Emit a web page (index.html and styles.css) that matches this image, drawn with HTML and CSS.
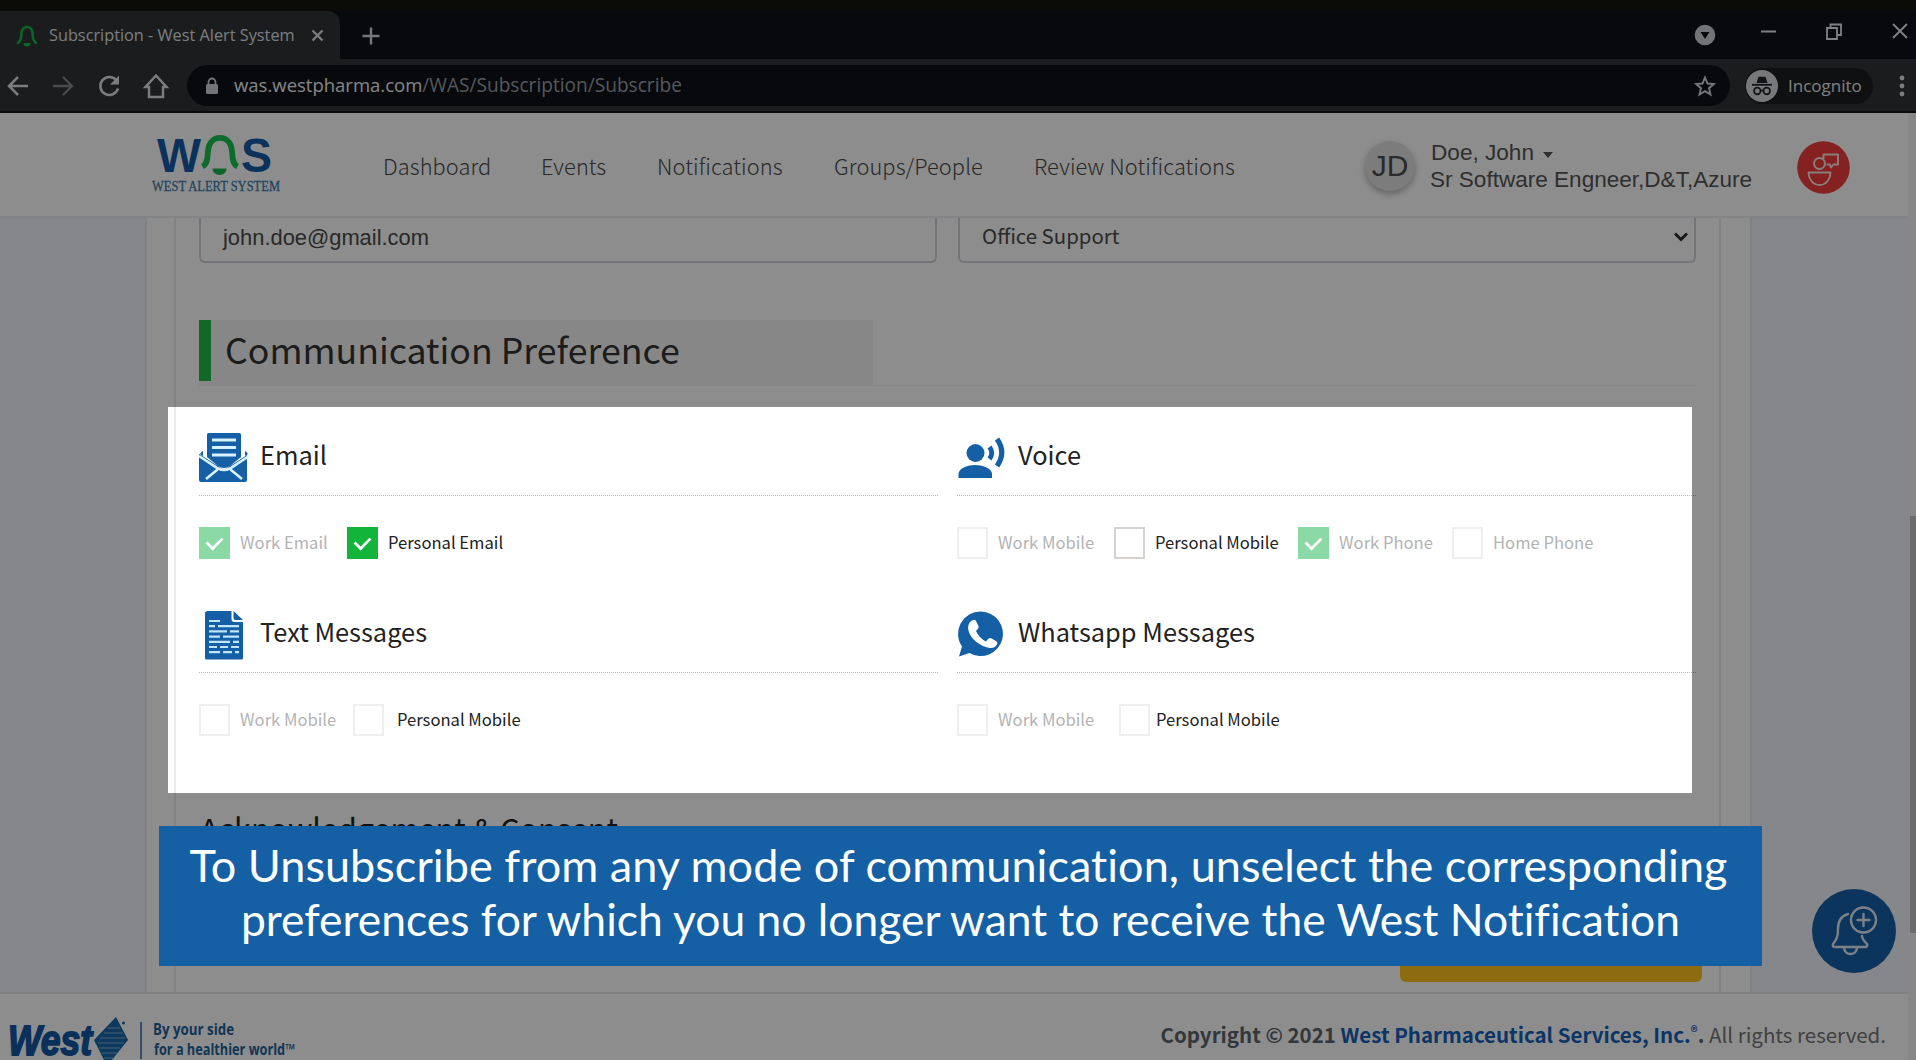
FILE: index.html
```
<!DOCTYPE html>
<html lang="en">
<head>
<meta charset="utf-8">
<title>Subscription - West Alert System</title>
<link rel="stylesheet" href="styles.css">
</head>
<body>
<div class="browser">
  <div class="tabstrip">
    <div class="tab">
      <svg class="tab-bell" width="22" height="24" viewBox="0 0 22 24"><path d="M2 19C6 16 5 12 5.500 9C6 1 16 1 16.500 9C17 12 16 16 20 19" fill="none" stroke="#14b848" stroke-width="2.600" stroke-linecap="round"/><path d="M7.500 19h7a3.500 3.500 0 0 1-7 0z" fill="#14b848"/></svg>
      <span class="tab-title">Subscription - West Alert System</span>
      <svg class="tab-close" width="13" height="13" viewBox="0 0 13 13"><path d="M1.500 1.500l10 10M11.500 1.500l-10 10" stroke="#dfe1e5" stroke-width="2.400"/></svg>
    </div>
    <svg class="tab-new" width="18" height="18" viewBox="0 0 18 18"><path d="M9 0.500v17M0.500 9h17" stroke="#d5d7da" stroke-width="2.400"/></svg>
    <div class="window-controls">
      <svg width="22" height="22" viewBox="0 0 22 22"><circle cx="11" cy="11" r="10.300" fill="#cfd2d6"/><path d="M6.500 8h9L11 15z" fill="#10151a"/></svg>
      <svg width="15" height="22" viewBox="0 0 15 22"><path d="M0 7.500h15" stroke="#e6e8ea" stroke-width="2"/></svg>
      <svg width="16" height="22" viewBox="0 0 16 22"><path d="M1 7h10v11H1zM4.500 7V3.500H15V14h-4" fill="none" stroke="#e6e8ea" stroke-width="1.800"/></svg>
      <svg width="16" height="22" viewBox="0 0 16 22"><path d="M1 3l14 14M15 3L1 17" stroke="#e6e8ea" stroke-width="1.900"/></svg>
    </div>
  </div>
  <div class="toolbar">
    <svg class="nav-icon" width="22" height="22" viewBox="0 0 22 22"><path d="M21 11H2.500M11 2l-9 9 9 9" fill="none" stroke="#dfe1e5" stroke-width="2.500"/></svg>
    <svg class="nav-icon dim" width="22" height="22" viewBox="0 0 22 22"><path d="M1 11h18.500M11 2l9 9-9 9" fill="none" stroke="#85888c" stroke-width="2.300"/></svg>
    <svg class="nav-icon" width="24" height="24" viewBox="0 0 24 24"><path d="M19.500 6.500A9 9 0 1 0 21 14.500" fill="none" stroke="#dfe1e5" stroke-width="2.600"/><path d="M22 1.500V10.500H13z" fill="#dfe1e5"/></svg>
    <svg class="nav-icon" width="24" height="26" viewBox="0 0 24 26"><path d="M12 2.500L1.500 14H5v10h14V14h3.500z" fill="none" stroke="#dfe1e5" stroke-width="2.500"/></svg>
    <div class="urlbar">
      <svg width="14" height="18" viewBox="0 0 14 18"><rect x="1" y="7" width="12" height="10" rx="1.500" fill="#cfd2d6"/><path d="M3.500 8V5a3.500 3.500 0 0 1 7 0v3" fill="none" stroke="#cfd2d6" stroke-width="1.800"/></svg>
      <div class="url"><span class="host">was.westpharma.com</span><span class="path">/WAS/Subscription/Subscribe</span></div>
      <svg class="star" width="22" height="22" viewBox="0 0 22 22"><path d="M11 2.500l2.500 6 6.300.5-4.800 4.200 1.500 6.300L11 16.200 5.500 19.500 7 13.200 2.200 9l6.300-.5z" fill="none" stroke="#d5d7da" stroke-width="1.900"/></svg>
    </div>
    <div class="incognito">
      <svg width="32" height="32" viewBox="0 0 32 32"><circle cx="16" cy="16" r="16" fill="#d9dadd"/><path d="M10.500 13l2-6.200h7l2 6.200z" fill="#202429"/><path d="M6 14.800h20" stroke="#202429" stroke-width="1.800"/><circle cx="11.300" cy="21" r="3.300" fill="none" stroke="#202429" stroke-width="1.700"/><circle cx="20.700" cy="21" r="3.300" fill="none" stroke="#202429" stroke-width="1.700"/><path d="M14.500 20.500h3" stroke="#202429" stroke-width="1.600"/></svg>
      <span>Incognito</span>
    </div>
    <svg class="menu" width="6" height="22" viewBox="0 0 6 22"><g fill="#dfe1e5"><circle cx="3" cy="3" r="2.400"/><circle cx="3" cy="11" r="2.400"/><circle cx="3" cy="19" r="2.400"/></g></svg>
  </div>
</div>

<div class="viewport">
  <div class="app">
    <header class="header">
      <svg class="logo" width="130" height="62" viewBox="151 133 130 62">
        <text x="157" y="171" class="logo-letter" textLength="44" lengthAdjust="spacingAndGlyphs">W</text>
        <text x="241" y="171" class="logo-letter" textLength="31" lengthAdjust="spacingAndGlyphs">S</text>
        <path d="M202.500 165.500C209 162 207 153 208.500 147C211 133.500 229 133.500 231.500 147C233 153 231 162 237.500 165.500" fill="none" stroke="#19c150" stroke-width="5.800"/>
        <path d="M212.500 167.500h14c0 8.500-14 8.500-14 0z" fill="#19b850"/>
        <text x="152" y="190" class="logo-sub" textLength="128" lengthAdjust="spacingAndGlyphs">WEST ALERT SYSTEM</text>
      </svg>
      <nav class="nav"><a class="n1">Dashboard</a><a class="n2">Events</a><a class="n3">Notifications</a><a class="n4">Groups/People</a><a class="n5">Review Notifications</a></nav>
      <div class="avatar">JD</div>
      <div class="user"><div class="user-name">Doe, John<i class="caret"></i></div><div class="user-role">Sr Software Engneer,D&amp;T,Azure</div></div>
      <svg class="help" width="53" height="53" viewBox="0 0 53 53"><circle cx="26.500" cy="26.500" r="26.300" fill="#f23d3d"/><g fill="none" stroke="#f7e4e2" stroke-width="1.900" stroke-linejoin="round"><circle cx="22.500" cy="22.500" r="5.500"/><path d="M11.500 31.500h22c0 6-4 12.500-11 12.500s-11-6.500-11-12.500zM26.500 18v-4.500h14.500v10h-4.500l-2.500 3-1-3h-3.500"/></g></svg>
    </header>
    <main class="main">
      <div class="panel"><div class="card">
        <div class="fields">
          <div class="field email">john.doe@gmail.com</div>
          <div class="field select"><span>Office Support</span><svg width="16" height="10" viewBox="0 0 16 10"><path d="M2 1.500l6 6 6-6" fill="none" stroke="#2b2b2b" stroke-width="2.800"/></svg></div>
        </div>
        <div class="section"><h2>Communication Preference</h2></div>
        <div class="prefs">
          <section class="pref">
            <div class="pref-head"><svg width="50" height="50" viewBox="0 0 50 50"><path d="M2 22L25 37 48 22V47a2 2 0 0 1-2 2H2a2 2 0 0 1-2-2V21zM8 1.500A1.500 1.500 0 0 1 9.500 0h31A1.500 1.500 0 0 1 42 1.500V24L31 33q-6 4-12 0L8 24z" fill="#155fa6"/><path d="M1 21q2-3 3-3v5zM49 21q-2-3-3-3v5z" fill="#155fa6"/><path d="M0 23L19 35.500q6 3 12 0L50 23M18.500 36.500L7 46M31.500 36.500L43 46" fill="none" stroke="#d8f3ff" stroke-width="2.600"/><path d="M13 7h24M13 14.500h24M13 22h24" stroke="#d8f3ff" stroke-width="3"/></svg><h3>Email</h3></div>
            <div class="checks r-email"><label class="check off"><i class="box on"></i>Work Email</label><label class="check"><i class="box on"></i>Personal Email</label></div>
          </section>
          <section class="pref">
            <div class="pref-head"><svg width="50" height="50" viewBox="0 0 50 50"><g fill="#155fa6"><circle cx="18.500" cy="20" r="9"/><path d="M1.500 45V41C1.500 35 11.500 32 18 32S35 35 35 41v4z"/></g><path d="M32.500 14q4.500 6 0 12" fill="none" stroke="#155fa6" stroke-width="4.800"/><path d="M40 6q9.500 13.500 0 27" fill="none" stroke="#155fa6" stroke-width="5.200"/></svg><h3>Voice</h3></div>
            <div class="checks r-voice"><label class="check off"><i class="box"></i>Work Mobile</label><label class="check"><i class="box strong"></i>Personal Mobile</label><label class="check off"><i class="box on"></i>Work Phone</label><label class="check off"><i class="box"></i>Home Phone</label></div>
          </section>
          <section class="pref">
            <div class="pref-head"><svg width="50" height="50" viewBox="0 0 50 50"><path d="M8 1h24.500v8q0 3 3 3H44v36a1.500 1.500 0 0 1-1.500 1.500H7.500A1.500 1.500 0 0 1 6 48V2.500z" fill="#155fa6"/><path d="M34.500 1L44 10h-7.500q-2 0-2-2z" fill="#155fa6"/><path d="M10 11h11M10 16.200h6M19 16.200h21M10 21.400h18M31 21.400h9M10 26.600h11M24 26.600h16M10 31.800h21M34 31.800h6M10 37h8M21 37h8M32 37h8M10 42.200h11M24 42.200h9M36 42.200h4" stroke="#bfe6fa" stroke-width="2.200"/></svg><h3>Text Messages</h3></div>
            <div class="checks r-text"><label class="check off"><i class="box"></i>Work Mobile</label><label class="check"><i class="box"></i>Personal Mobile</label></div>
          </section>
          <section class="pref">
            <div class="pref-head"><svg width="50" height="50" viewBox="0 0 50 50"><path d="M24 1.500a22.300 22.300 0 1 1-11.500 41.600L2 46.500l3-10A22.300 22.300 0 0 1 24 1.500z" fill="#155fa6"/><path d="M13 12l3-2q2-1 3 1l2.500 5q.8 2-2.500 5 3 7 10 10.500 3-4 5-3.300l5.500 3q1.500 1.200.5 3.300-2.500 4-7 3.500C20 36 9 24 11.500 15q.5-2 1.500-3z" fill="#fff"/></svg><h3>Whatsapp Messages</h3></div>
            <div class="checks r-whats"><label class="check off"><i class="box"></i>Work Mobile</label><label class="check"><i class="box"></i>Personal Mobile</label></div>
          </section>
        </div>
        <h2 class="ack">Acknowledgement &amp; Consent</h2>
        <div class="submit"></div>
      </div></div>
    </main>
    <footer class="footer">
      <svg class="west" width="300" height="46" viewBox="0 1014 300 46">
        <text x="8" y="1055" class="west-word" textLength="84" lengthAdjust="spacingAndGlyphs">West</text>
        <path d="M116 1017L128 1040 107 1066 94 1040z" fill="#1767a8"/>
        <path d="M108 1028h12M104 1033h19M100 1038h25M98 1043h26M99 1048h21M102 1053h15M104 1058h10" stroke="#7fb0d2" stroke-width="1.200"/>
        <circle cx="123.500" cy="1023" r="1.500" fill="#1767a8"/>
        <path d="M141 1022v37" stroke="#5d8fb9" stroke-width="2"/>
        <text x="153" y="1035" class="west-tag" textLength="81" lengthAdjust="spacingAndGlyphs">By your side</text>
        <text x="154" y="1055" class="west-tag" textLength="141" lengthAdjust="spacingAndGlyphs">for a healthier world™</text>
      </svg>
      <div class="copyright"><b>Copyright © 2021 <a>West Pharmaceutical Services, Inc.<sup>®</sup></a>.</b> All rights reserved.</div>
    </footer>
  </div>
  <div class="scrollbar"><div class="thumb"></div></div>
</div>

<svg class="fab" width="84" height="84" viewBox="0 0 84 84"><circle cx="42" cy="42" r="42" fill="#1560a8"/><g fill="none" stroke="#dfe9f2" stroke-width="2.400" stroke-linecap="round" stroke-linejoin="round"><path d="M36 25c-7 2-10 8-10 15 0 9-2 11-5 15q-1 3 2 3h30q3 0 2-3c-3-3-5-5-5-8"/><path d="M32 59c1 8 12 8 13 0"/><circle cx="51.500" cy="31" r="12.500"/><path d="M51.500 25v12M45.500 31h12"/></g></svg>
<div class="spotlight"></div>
<div class="banner"><p class="l1">To Unsubscribe from any mode of communication, unselect the corresponding</p><p class="l2">preferences for which you no longer want to receive the West Notification</p></div>
</body>
</html>
```
FILE: styles.css
```
* { box-sizing: border-box; margin: 0; padding: 0; }
html, body { width: 1916px; height: 1060px; overflow: hidden; }
body { position: relative; background: #fff; font-family: "Noto Sans CJK SC", "Noto Sans", sans-serif; color: #222; display: flex; flex-direction: column; }
svg { display: block; flex: none; overflow: visible; }
i { font-style: normal; }

/* browser chrome */
.browser { height: 113px; flex: none; background: #2f3337; border-bottom: 2px solid #111315; font-family: "Open Sans", sans-serif; }
.tabstrip { height: 59px; background: #0d1216; border-top: 11px solid #14140f; display: flex; align-items: center; }
.tab { width: 340px; height: 48px; background: #2f3337; border-radius: 0 12px 0 0; display: flex; align-items: center; padding-left: 16px; }
.tab-bell { margin-top: 2px; }
.tab-close { margin-top: 1px; }
.tab-title { margin-left: 11px; width: 262px; font-size: 16.300px; line-height: 24px; color: #dfe1e5; white-space: nowrap; }
.tab-new { margin-left: 22px; margin-top: 1px; }
.window-controls { margin-left: auto; padding-right: 8px; display: flex; align-items: center; }
.window-controls svg:nth-child(2) { margin-left: 45px; }
.window-controls svg:nth-child(3) { margin-left: 50px; margin-top: -6px; }
.window-controls svg:nth-child(4) { margin-left: 50px; margin-top: -6px; }
.toolbar { height: 52px; display: flex; align-items: center; padding: 1px 0 0 7px; }
.nav-icon { margin-right: 23px; }
.nav-icon.dim { margin-right: 23px; }
.nav-icon:nth-child(4) { margin-right: 19px; }
.urlbar { width: 1543px; height: 41px; border-radius: 21px; background: #0d1216; display: flex; align-items: center; padding: 0 14px 0 18px; }
.url { margin-left: 15px; line-height: 26px; white-space: nowrap; }
.host { font-size: 18.500px; color: #f0f1f3; }
.path { font-size: 19.100px; color: #9b9fa4; }
.star { margin-left: auto; }
.incognito { margin-left: 15px; width: 128px; height: 36px; border-radius: 18px; background: #1b1d20; display: flex; align-items: center; padding-left: 1px; font-size: 17px; color: #e6e8ea; }
.incognito span { margin-left: 10px; line-height: 24px; }
.menu { margin-left: 26px; }

/* page */
.viewport { flex: 1; min-height: 0; display: flex; }
.app { flex: 1; display: flex; flex-direction: column; }
.scrollbar { width: 8px; background: #f5f5f5; padding: 403px 0 0 2px; }
.thumb { height: 417px; background: #c4c4c4; }
.header { height: 105px; flex: none; border-bottom: 2px solid #eceff2; display: flex; align-items: center; padding: 1px 0 0 151px; }
.logo { flex: none; }
.logo-letter { font: 700 48px "Liberation Sans", sans-serif; fill: #155ba8; }
.logo-sub { font: 400 14px "Liberation Serif", serif; fill: #3f7dab; stroke: #3f7dab; stroke-width: .3px; }
.nav { margin-left: 102px; display: flex; gap: 50px; color: #4a4a4a; font-size: 21.800px; letter-spacing: .08px; line-height: 30px; white-space: nowrap; width: 982px; margin-top: 2px; font-weight: 300; }
.n1 { width: 108px; } .n2 { width: 66px; } .n3 { width: 127px; } .n4 { width: 150px; }
.avatar { width: 50px; height: 50px; border-radius: 50%; background: #e1e1e1; box-shadow: 0 3px 6px rgba(0,0,0,.3); font: 30px/50px "Liberation Sans", sans-serif; text-align: center; color: #4c4c4c; flex: none; margin-top: 2px; }
.user { margin: 2px 0 0 15px; width: 367px; font: 22.600px/27px "Liberation Sans", sans-serif; color: #555; white-space: nowrap; }
.user-name { padding-left: 1px; display: flex; align-items: center; }
.user-role { font-size: 22.550px; }
.caret { margin: 4px 0 0 9px; border: 5.500px solid transparent; border-top: 6px solid #555; border-bottom: 0; }
.help { margin-top: 4px; }
.main { height: 774px; flex: none; background: #f0f4fa; padding-left: 145px; overflow: hidden; }
.panel { width: 1607px; height: 100%; background: #fff; border: 2px solid #e6e8ec; border-width: 0 2px; padding: 0 29px 0 27px; }
.card { height: 100%; border: 2px solid #e9ebee; border-width: 0 2px; padding: 0 22px 0 23px; }
.fields { display: flex; gap: 21px; }
.field { width: 738px; height: 45px; border: 2px solid #d0d4d9; border-top: 0; border-radius: 0 0 6px 6px; color: #4a4a4a; }
.email { font: 21.900px/39px "Liberation Sans", sans-serif; padding-left: 22px; }
.select { font-size: 20.400px; line-height: 35px; padding: 0 5px 0 22px; display: flex; justify-content: space-between; }
.select svg { margin-top: 14px; }
.section { margin-top: 57px; height: 66px; border-bottom: 1px solid #f3f3f3; }
.section h2 { width: 674px; height: 65px; background: linear-gradient(#1fbc48, #1fbc48) 0 0 / 12px 61px no-repeat #f5f5f5; padding-left: 26px; font-size: 35.700px; font-weight: 400; line-height: 58px; white-space: nowrap; color: #333; }
.prefs { display: grid; grid-template-columns: 739px 739px; column-gap: 19px; }
.pref { height: 177px; }
.pref-head { height: 110px; padding: 43px 0 9px; border-bottom: 1px dotted #b9b9b9; display: flex; align-items: center; }
.pref h3 { margin: -7px 0 0 11px; font-size: 25.400px; font-weight: 400; line-height: 36px; color: #222; white-space: nowrap; }
.checks { padding-top: 31px; display: grid; }
.r-email { grid-template-columns: 148px 200px; }
.r-voice { grid-template-columns: 157px 184px 154px 150px; }
.r-text { grid-template-columns: 154px 200px; }
.r-whats { grid-template-columns: 162px 200px; }
.check { height: 32px; display: flex; align-items: center; gap: 10px; font-size: 16.600px; line-height: 30px; padding-bottom: 2px; white-space: nowrap; color: #222; }
.check.off { color: #b3b3b3; }
.r-text .check:nth-child(2) { gap: 13px; }
.r-whats .check:nth-child(2) { gap: 6px; }
.box { width: 31px; height: 32px; flex: none; margin-top: 2px; border: 2px solid #efefef; background: #fff; }
.box.strong { border-color: #d6d2d0; }
.box.on { border: 0; background: #12b53a; display: flex; align-items: center; justify-content: center; }
.box.on::after { content: ""; width: 14px; height: 8px; margin-top: -4px; border: solid #fff; border-width: 0 0 3px 3px; transform: rotate(-45deg) scale(.9); }
.off .box.on { background: #8bdaa5; }
.ack { margin-top: 68px; height: 40px; line-height: 40px; font-size: 30.500px; font-weight: 400; padding-left: 1px; color: #222; }
.submit { width: 302px; height: 50px; margin: 84px -5px 0 auto; border-radius: 6px; background: #ffc21f; }
.footer { flex: 1; border-top: 2px solid #e4e7ea; display: flex; justify-content: space-between; padding-top: 20px; overflow: hidden; }
.west-word { font: italic 700 43px "Liberation Sans", sans-serif; fill: #1258a4; stroke: #1258a4; stroke-width: 1.800px; }
.west-tag { font: 700 15.500px "Open Sans", sans-serif; fill: #1d629c; }
.copyright { font-size: 20.500px; line-height: 30px; margin-top: 5px; padding-right: 22px; color: #767676; white-space: nowrap; }
.copyright b { color: #5d646b; }
.copyright a { color: #1461b8; }
.copyright sup { font-size: 14px; line-height: 0; vertical-align: 6px; }

/* overlays */
.fab { position: absolute; left: 1812px; top: 889px; }
.spotlight { position: absolute; left: 168px; top: 407px; width: 1524px; height: 386px; box-shadow: 0 0 0 2000px rgba(0,0,0,.447); }
.banner { position: absolute; left: 159px; top: 826px; width: 1603px; height: 140px; background: #1560a4; color: #fff; font-family: Lato, sans-serif; font-variant-ligatures: none; text-align: center; padding-top: 13px; white-space: nowrap; }
.banner p { line-height: 53px; }
.l1 { font-size: 45px; letter-spacing: .05px; margin-left: -4px; }
.l2 { font-size: 44.400px; }
```
